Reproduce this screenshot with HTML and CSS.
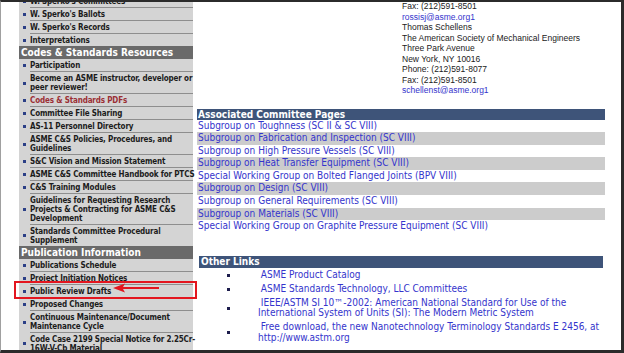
FILE: index.html
```html
<!DOCTYPE html>
<html lang="en">
<head>
  <meta charset="UTF-8">
  <meta name="viewport" content="width=device-width, initial-scale=1.0">
  <title>ASME Codes &amp; Standards - Committee Pages</title>
  <link rel="stylesheet" href="styles.css">
</head>
<body>
  <div class="page">
    <!-- menu lateral -->
    <div class="sidebar">
      <ul class="side-list side-top">
        <li><span class="dot"></span><a href="#">W. Sperko's Committees</a></li>
        <li><span class="dot"></span><a href="#">W. Sperko's Ballots</a></li>
        <li><span class="dot"></span><a href="#">W. Sperko's Records</a></li>
        <li><span class="dot"></span><a href="#">Interpretations</a></li>
      </ul>
      <h3 class="side-title">Codes &amp; Standards Resources</h3>
      <ul class="side-list">
        <li><span class="dot"></span><a href="#">Participation</a></li>
        <li><span class="dot"></span><a href="#">Become an ASME instructor, developer or<br>peer reviewer!</a></li>
        <li><span class="dot"></span><a href="#" class="current">Codes &amp; Standards PDFs</a></li>
        <li><span class="dot"></span><a href="#">Committee File Sharing</a></li>
        <li><span class="dot"></span><a href="#">AS-11 Personnel Directory</a></li>
        <li><span class="dot"></span><a href="#">ASME C&amp;S Policies, Procedures, and<br>Guidelines</a></li>
        <li><span class="dot"></span><a href="#">S&amp;C Vision and Mission Statement</a></li>
        <li><span class="dot"></span><a href="#">ASME C&amp;S Committee Handbook for PTCS</a></li>
        <li><span class="dot"></span><a href="#">C&amp;S Training Modules</a></li>
        <li><span class="dot"></span><a href="#">Guidelines for Requesting Research<br>Projects &amp; Contracting for ASME C&amp;S<br>Development</a></li>
        <li><span class="dot"></span><a href="#">Standards Committee Procedural<br>Supplement</a></li>
      </ul>
      <h3 class="side-title">Publication Information</h3>
      <ul class="side-list">
        <li><span class="dot"></span><a href="#">Publications Schedule</a></li>
        <li><span class="dot"></span><a href="#">Project Initiation Notices</a></li>
        <li><span class="dot"></span><a href="#">Public Review Drafts</a></li>
        <li><span class="dot"></span><a href="#">Proposed Changes</a></li>
        <li><span class="dot"></span><a href="#">Continuous Maintenance/Document<br>Maintenance Cycle</a></li>
        <li><span class="dot"></span><a href="#">Code Case 2199 Special Notice for 2.25Cr-<br>16W-V-Cb Material</a></li>
      </ul>
    </div>

    <!-- contenido -->
    <div class="main">
      <address class="contact">
        Fax: (212)591-8501<br>
        <a href="#">rossisj@asme.org1</a><br>
        Thomas Schellens<br>
        The American Society of Mechanical Engineers<br>
        Three Park Avenue<br>
        New York, NY 10016<br>
        Phone: (212)591-8077<br>
        Fax: (212)591-8501<br>
        <a href="#">schellenst@asme.org1</a>
      </address>

      <div class="committee">
        <div class="block-head">Associated Committee Pages</div>
        <a class="committee-row" href="#">Subgroup on Toughness (SC II &amp; SC VIII)</a>
        <a class="committee-row alt" href="#">Subgroup on Fabrication and Inspection (SC VIII)</a>
        <a class="committee-row" href="#">Subgroup on High Pressure Vessels (SC VIII)</a>
        <a class="committee-row alt" href="#">Subgroup on Heat Transfer Equipment (SC VIII)</a>
        <a class="committee-row" href="#">Special Working Group on Bolted Flanged Joints (BPV VIII)</a>
        <a class="committee-row alt" href="#">Subgroup on Design (SC VIII)</a>
        <a class="committee-row" href="#">Subgroup on General Requirements (SC VIII)</a>
        <a class="committee-row alt" href="#">Subgroup on Materials (SC VIII)</a>
        <a class="committee-row" href="#">Special Working Group on Graphite Pressure Equipment (SC VIII)</a>
      </div>

      <div class="other">
        <div class="block-head">Other Links</div>
        <ul class="other-list">
          <li><span class="sq"></span><a href="#">&nbsp;ASME Product Catalog</a></li>
          <li><span class="sq"></span><a href="#">&nbsp;ASME Standards Technology, LLC Committees</a></li>
          <li><span class="sq"></span><a href="#">&nbsp;IEEE/ASTM SI 10™-2002: American National Standard for Use of the<br>International System of Units (SI): The Modern Metric System</a></li>
          <li><span class="sq"></span><a href="#">&nbsp;Free download, the new Nanotechnology Terminology Standards E 2456, at<br>http://www.astm.org</a></li>
        </ul>
      </div>
    </div>

    <!-- marca roja sobre el menu -->
    <div class="callout"></div>
    <svg class="arrow" width="46" height="10" viewBox="0 0 46 10">
      <path d="M0 5 L12 0.5 L10 4 L46 4 L46 6 L10 6 L12 9.5 Z" fill="#e3161f"/>
    </svg>
  </div>
</body>
</html>
```

FILE: styles.css
```css
/* **pagina asme** */

*{
  margin: 0;
  padding: 0;
  box-sizing: border-box;
}

:root{
  --side-bg:#d4d4d4;
  --side-title:#6a6a6a;
  --head-bg:#3e5479;
  --link:#3434cc;
  --row-alt:#cccccc;
}

body{
  background: #fff;
}

a{
  color: inherit;
  text-decoration: none;
}

/* marco */
.page{
  position: relative;
  width: 624px;
  height: 353px;
  overflow: hidden;
  display: flex;
  border-top: 2px solid #2b2b2b;
  border-right: 3px solid #2b2b2b;
  border-bottom: 3px solid #2b2b2b;
  border-left: 1px solid #a0a0a0;
}

/* menu lateral */
.sidebar{
  margin-left: 18px;
  width: 174px;
  flex: none;
  background: var(--side-bg);
  font-family: "DejaVu Sans Condensed", "DejaVu Sans", sans-serif;
  font-stretch: condensed;
  font-weight: bold;
  font-size: 8px;
  letter-spacing: -0.15px;
  color: #1c1c1c;
}

.side-top{
  margin-top: -7px;
}

.side-list{
  list-style: none;
}

.side-list li{
  display: flex;
  align-items: center;
}

.side-list .dot{
  flex: none;
  width: 11px;
  display: flex;
  justify-content: center;
}

.side-list .dot::before{
  content: "";
  width: 3px;
  height: 3px;
  margin-left: -1px;
  background: #2b3f86;
}

.side-list a{
  flex: 1;
  display: block;
  min-width: 0;
  white-space: nowrap;
  line-height: 9px;
  padding: 1.5px 0;
  border-bottom: 1px solid #8e8e8e;
}

.side-list li:last-child a{
  border-bottom: none;
}

.side-list a.current{
  color: #9b2f34;
}

.side-title{
  background: var(--side-title);
  color: #fff;
  font-size: 10px;
  letter-spacing: 0;
  line-height: 13px;
  padding-left: 2px;
  white-space: nowrap;
}

/* contenido */
.main{
  flex: 1;
  display: flex;
  flex-direction: column;
}

.contact{
  margin: -1px 0 0 209px;
  font-style: normal;
  font-family: "Liberation Sans", Arial, sans-serif;
  font-size: 8.5px;
  line-height: 10.5px;
  color: #222;
}

.contact a{
  color: var(--link);
}

.committee,
.other{
  font-family: "DejaVu Sans Condensed", "DejaVu Sans", sans-serif;
  font-stretch: condensed;
  font-size: 10px;
  color: var(--link);
}

.committee{
  margin: 13px 0 0 4px;
  width: 408px;
}

.block-head{
  background: var(--head-bg);
  color: #fff;
  font-weight: bold;
  line-height: 11px;
  padding-left: 1px;
}

.committee-row{
  display: block;
  line-height: 12.6px;
  padding-left: 1px;
  white-space: nowrap;
}

.committee-row.alt{
  background: var(--row-alt);
}

.other{
  margin: 23px 0 0 6px;
  width: 404px;
}

.other .block-head{
  line-height: 12px;
  padding-left: 2px;
}

.other-list{
  list-style: none;
  padding-top: 2px;
  display: flex;
  flex-direction: column;
  gap: 3.5px;
}

.other-list li{
  display: flex;
  align-items: center;
}

.other-list .sq{
  flex: none;
  width: 3px;
  height: 3px;
  margin: 0 28px 0 28px;
  background: #1d1d4d;
}

.other-list a{
  line-height: 10.5px;
  white-space: nowrap;
}

/* recuadro y flecha */
.callout{
  position: absolute;
  left: 13px;
  top: 279px;
  width: 183px;
  height: 18px;
  border: 2px solid #e3161f;
}

.arrow{
  position: absolute;
  left: 112px;
  top: 281px;
}
```
